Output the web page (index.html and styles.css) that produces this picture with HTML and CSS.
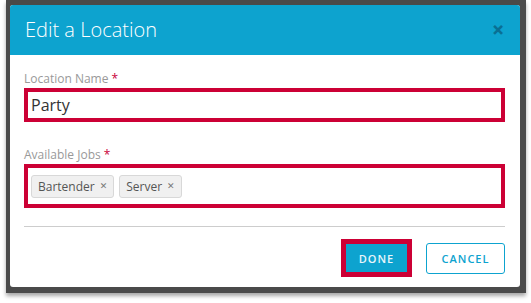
FILE: index.html
```html
<!DOCTYPE html>
<html lang="en">
<head>
  <meta charset="UTF-8" />
  <title>Edit a Location</title>
  <link rel="stylesheet" href="styles.css">
</head>
<body>
  <div class="frame">
    <div class="dialog">
      <div class="dialog-header">
        <div class="dialog-title">Edit a Location</div>
        <span class="close">&#x2715;</span>
      </div>

      <div class="dialog-body">
        <div class="field">
          <label class="field-label">Location Name <span class="req">*</span></label>
          <div class="input highlight">Party</div>
        </div>

        <div class="field">
          <label class="field-label">Available Jobs <span class="req">*</span></label>
          <div class="input tags highlight">
            <span class="tag">Bartender <span class="tag-x">&#x2715;</span></span>
            <span class="tag">Server <span class="tag-x">&#x2715;</span></span>
          </div>
        </div>

        <div class="divider"></div>

        <div class="actions">
          <button class="btn btn-done">DONE</button>
          <button class="btn btn-cancel">CANCEL</button>
        </div>
      </div>
    </div>
  </div>
</body>
</html>
```

FILE: styles.css
```css
* {
  margin: 0;
  padding: 0;
  box-sizing: border-box;
}

body {
  background: #fff;
  font-family: 'Open Sans', sans-serif;
  width: 531px;
  height: 303px;
  overflow: hidden;
}

.frame {
  margin-left: 6px;
  width: 520px;
  background: #4a4a4a;
  padding: 5px 6px 6px 4px;
  box-shadow: 0 3px 4px rgba(0, 0, 0, 0.35);
}

.dialog {
  background: #fff;
  border-radius: 3px;
  overflow: hidden;
  height: 282px;
}

.dialog-header {
  background: #0da3cf;
  height: 50px;
  padding: 0 16px 0 15px;
  display: flex;
  align-items: center;
  justify-content: space-between;
}

.dialog-title {
  color: #fff;
  font-size: 20px;
  font-weight: 300;
  margin-top: -1px;
}

.close {
  color: #0a6f93;
  font-size: 14px;
  font-weight: bold;
  font-family: 'DejaVu Sans', sans-serif;
  -webkit-text-stroke: 1px #0a6f93;
}

.dialog-body {
  padding: 16px 15px 0 14px;
}

.field {
  margin-bottom: 25px;
}

.field-label {
  display: block;
  font-size: 12px;
  line-height: 16px;
  color: #999;
  margin-bottom: 1px;
}

.req {
  color: #c8003a;
}

.highlight {
  border: 4px solid #cc0035;
}

.input {
  height: 34px;
  padding: 0 3px;
  font-size: 16px;
  color: #333;
  display: flex;
  align-items: center;
}

.tags {
  height: 44px;
  gap: 5px;
}

.tag {
  background: #f0f0f0;
  border: 1px solid #d8d8d8;
  border-radius: 3px;
  font-size: 12px;
  color: #555;
  height: 23px;
  padding: 0 6px;
  display: flex;
  align-items: center;
  gap: 5px;
}

.tag-x {
  font-size: 9px;
  color: #777;
  font-family: 'DejaVu Sans', sans-serif;
}

.field + .field {
  margin-bottom: 18px;
}

.divider {
  height: 1px;
  background: #cdcdcd;
}

.actions {
  display: flex;
  justify-content: flex-end;
  align-items: center;
  gap: 14px;
  margin-top: 12px;
}

.btn {
  font-family: 'Open Sans', sans-serif;
  font-size: 11px;
  font-weight: 600;
  letter-spacing: 1px;
  cursor: pointer;
}

.btn-done {
  background: #0da3cf;
  color: #e8f6fb;
  border: 5px solid #cc0035;
  width: 71px;
  height: 38px;
}

.btn-cancel {
  background: #fff;
  color: #0da3cf;
  border: 1px solid #0da3cf;
  border-radius: 3px;
  width: 79px;
  height: 31px;
}
```
